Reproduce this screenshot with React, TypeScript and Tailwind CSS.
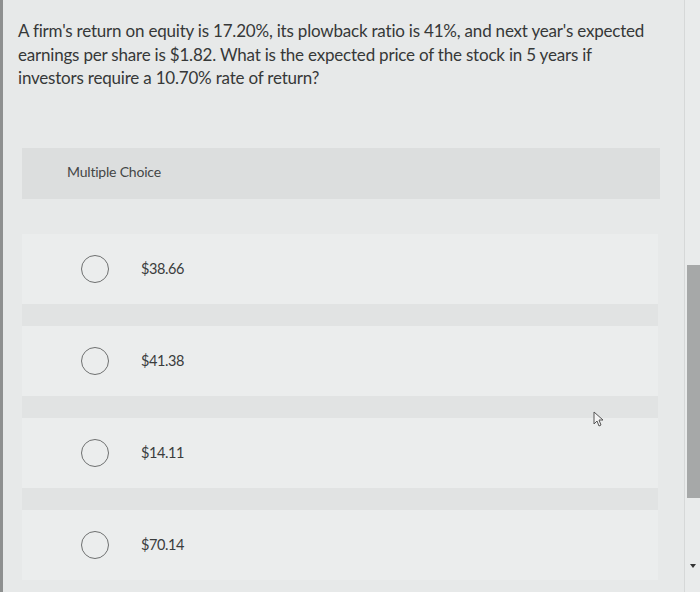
import React from "react";

const options = ["$38.66", "$41.38", "$14.11", "$70.14"];

export default function App() {
  return (
    <div
      className="w-[700px] h-[592px] bg-[#e7e9e9] relative overflow-hidden flex border-l-[3px] border-[#8e9090]"
      style={{ fontFamily: "Lato, 'Open Sans', sans-serif" }}
    >
      <div className="flex-1 flex flex-col">
        <p className="pl-[15px] pt-[19px] pr-[30px] text-[17px] leading-[23.5px] tracking-[-0.2px] text-[#363838]">
          A firm's return on equity is 17.20%, its plowback ratio is 41%, and next year's expected earnings per share is $1.82. What is the expected price of the stock in 5 years if investors require a 10.70% rate of return?
        </p>
        <div className="mt-[58px] ml-[19px] w-[638px] h-[51px] bg-[#dcdede] flex items-center pl-[45px] pb-[4px] text-[14px] tracking-[-0.2px] text-[#444646]">
          Multiple Choice
        </div>
        <div className="mt-[35px] ml-[19px] w-[636px] flex flex-col">
          {options.map((o, i) => (
            <React.Fragment key={o}>
              {i > 0 && <div className="h-[22px] bg-[#e1e3e3]" />}
              <div className="h-[70px] bg-[#ebeded] flex items-center pl-[59px]">
                <div className="w-[28px] h-[28px] rounded-full border-[1.5px] border-[#6e7070]" />
                <span className="ml-[32px] text-[14.5px] tracking-[-0.4px] text-[#3a3c3c]">{o}</span>
              </div>
            </React.Fragment>
          ))}
        </div>
      </div>
      <div className="w-[16px] flex flex-col items-end border-l border-[#d6d8d8] bg-[#e9ebeb]">
        <div className="h-[265px]" />
        <div className="w-[13px] h-[233px] bg-[#a6a8a8]" />
        <div className="flex-1" />
        <div className="w-full flex justify-center pb-[24px]">
          <svg width="6" height="4" viewBox="0 0 6 4">
            <path d="M0 0 L6 0 L3 4 Z" fill="#333" />
          </svg>
        </div>
      </div>
      <svg
        className="absolute left-[590px] top-[411px]"
        width="11"
        height="16"
        viewBox="0 0 11 16"
      >
        <path
          d="M1 1 L1 13 L4 10 L6 15 L8 14 L6 9 L10 9 Z"
          fill="#f4f4f4"
          stroke="#555"
          strokeWidth="1"
          strokeLinejoin="round"
        />
      </svg>
    </div>
  );
}
